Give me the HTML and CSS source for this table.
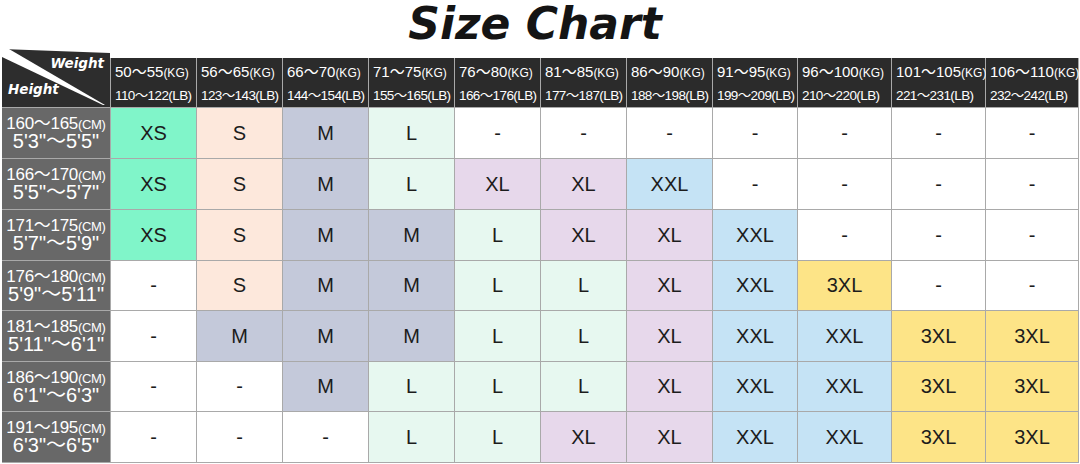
FILE: index.html
```html
<!DOCTYPE html>
<html>
<head>
<meta charset="utf-8">
<link rel="stylesheet" href="styles.css">
</head>
<body>
<h1 class="title">Size Chart</h1>
<div class="chart">
  <div class="corner">
    <svg width="108" height="59" viewBox="0 0 108 59">
      <polygon points="0,1 108,5 108,59 0,59" fill="#2d2d2d"/>
      <polygon points="0,1 7,1 103,57 101,57 0,9" fill="#ffffff"/>
      <text x="102" y="20" text-anchor="end" class="cw">Weight</text>
      <text x="6" y="46" class="cw">Height</text>
    </svg>
  </div>
  <div class="hd"><div class="l1">50～55<small>(KG)</small></div><div class="l2">110～122(LB)</div></div>
  <div class="hd"><div class="l1">56～65<small>(KG)</small></div><div class="l2">123～143(LB)</div></div>
  <div class="hd"><div class="l1">66～70<small>(KG)</small></div><div class="l2">144～154(LB)</div></div>
  <div class="hd"><div class="l1">71～75<small>(KG)</small></div><div class="l2">155～165(LB)</div></div>
  <div class="hd"><div class="l1">76～80<small>(KG)</small></div><div class="l2">166～176(LB)</div></div>
  <div class="hd"><div class="l1">81～85<small>(KG)</small></div><div class="l2">177～187(LB)</div></div>
  <div class="hd"><div class="l1">86～90<small>(KG)</small></div><div class="l2">188～198(LB)</div></div>
  <div class="hd"><div class="l1">91～95<small>(KG)</small></div><div class="l2">199～209(LB)</div></div>
  <div class="hd"><div class="l1">96～100<small>(KG)</small></div><div class="l2">210～220(LB)</div></div>
  <div class="hd"><div class="l1">101～105<small>(KG)</small></div><div class="l2">221～231(LB)</div></div>
  <div class="hd"><div class="l1">106～110<small>(KG)</small></div><div class="l2">232～242(LB)</div></div>

  <div class="rh"><div class="r1">160～165<small>(CM)</small></div><div class="r2">5'3"～5'5"</div></div>
  <div class="c xs">XS</div><div class="c s">S</div><div class="c m">M</div><div class="c l">L</div><div class="c e">-</div><div class="c e">-</div><div class="c e">-</div><div class="c e">-</div><div class="c e">-</div><div class="c e">-</div><div class="c e">-</div>

  <div class="rh"><div class="r1">166～170<small>(CM)</small></div><div class="r2">5'5"～5'7"</div></div>
  <div class="c xs">XS</div><div class="c s">S</div><div class="c m">M</div><div class="c l">L</div><div class="c xl">XL</div><div class="c xl">XL</div><div class="c xxl">XXL</div><div class="c e">-</div><div class="c e">-</div><div class="c e">-</div><div class="c e">-</div>

  <div class="rh"><div class="r1">171～175<small>(CM)</small></div><div class="r2">5'7"～5'9"</div></div>
  <div class="c xs">XS</div><div class="c s">S</div><div class="c m">M</div><div class="c m">M</div><div class="c l">L</div><div class="c xl">XL</div><div class="c xl">XL</div><div class="c xxl">XXL</div><div class="c e">-</div><div class="c e">-</div><div class="c e">-</div>

  <div class="rh"><div class="r1">176～180<small>(CM)</small></div><div class="r2">5'9"～5'11"</div></div>
  <div class="c e">-</div><div class="c s">S</div><div class="c m">M</div><div class="c m">M</div><div class="c l">L</div><div class="c l">L</div><div class="c xl">XL</div><div class="c xxl">XXL</div><div class="c x3">3XL</div><div class="c e">-</div><div class="c e">-</div>

  <div class="rh"><div class="r1">181～185<small>(CM)</small></div><div class="r2">5'11"～6'1"</div></div>
  <div class="c e">-</div><div class="c m">M</div><div class="c m">M</div><div class="c m">M</div><div class="c l">L</div><div class="c l">L</div><div class="c xl">XL</div><div class="c xxl">XXL</div><div class="c xxl">XXL</div><div class="c x3">3XL</div><div class="c x3">3XL</div>

  <div class="rh"><div class="r1">186～190<small>(CM)</small></div><div class="r2">6'1"～6'3"</div></div>
  <div class="c e">-</div><div class="c e">-</div><div class="c m">M</div><div class="c l">L</div><div class="c l">L</div><div class="c l">L</div><div class="c xl">XL</div><div class="c xxl">XXL</div><div class="c xxl">XXL</div><div class="c x3">3XL</div><div class="c x3">3XL</div>

  <div class="rh"><div class="r1">191～195<small>(CM)</small></div><div class="r2">6'3"～6'5"</div></div>
  <div class="c e">-</div><div class="c e">-</div><div class="c e">-</div><div class="c l">L</div><div class="c l">L</div><div class="c xl">XL</div><div class="c xl">XL</div><div class="c xxl">XXL</div><div class="c xxl">XXL</div><div class="c x3">3XL</div><div class="c x3">3XL</div>
</div>
</body>
</html>
```

FILE: styles.css
```css
html, body {
  margin: 0;
  padding: 0;
  background: #ffffff;
}
body {
  width: 1080px;
  height: 464px;
  overflow: hidden;
  font-family: "Liberation Sans", Arial, "Noto Sans CJK SC", sans-serif;
}
.title {
  margin: 0;
  height: 58px;
  padding-right: 10px;
  text-align: center;
  font-family: "DejaVu Sans", sans-serif;
  font-weight: bold;
  font-style: italic;
  font-size: 44px;
  line-height: 48px;
  color: #141414;
}
.chart {
  display: grid;
  grid-template-columns: 108px repeat(7, 85px) 84px 93px 93px 92px;
  grid-template-rows: 49px 50px 50px 50px 49px 50px 49px 50px;
  gap: 1px;
  margin-left: 2px;
  padding: 0 1px 1px 0;
  width: max-content;
  background: #a9a9a9;
}
.corner {
  margin-top: -10px;
  background: #ffffff;
}
.corner svg {
  display: block;
}
.cw {
  font-family: "DejaVu Sans", sans-serif;
  font-weight: bold;
  font-style: italic;
  font-size: 13.5px;
  fill: #ffffff;
}
.hd {
  background: #2b2b2b;
  color: #ffffff;
  padding: 4px 0 0 4px;
  white-space: nowrap;
}
.hd .l1 {
  font-size: 15px;
  line-height: 20px;
  height: 20px;
}
.hd .l1 small {
  font-size: 12px;
}
.hd .l2 {
  margin-top: 3px;
  font-size: 13.5px;
  line-height: 22px;
  height: 22px;
  letter-spacing: -0.6px;
}
.rh {
  background: #686868;
  color: #ffffff;
  display: flex;
  flex-direction: column;
  align-items: center;
  padding-top: 8px;
  white-space: nowrap;
}
.rh .r1 {
  font-size: 17px;
  line-height: 16px;
  height: 16px;
  letter-spacing: -0.3px;
}
.rh .r1 small {
  font-size: 13px;
}
.rh .r2 {
  font-size: 20px;
  line-height: 18px;
  height: 18px;
}
.c {
  display: flex;
  align-items: center;
  justify-content: center;
  font-size: 20px;
  color: #1c1c1c;
  background: #ffffff;
}
.xs { background: #80f5c9; }
.s { background: #fde8dc; }
.m { background: #c4c9da; }
.l { background: #e7f8f0; }
.xl { background: #e7d8eb; }
.xxl { background: #c5e3f5; }
.x3 { background: #fde487; }
.e { background: #ffffff; }
```
